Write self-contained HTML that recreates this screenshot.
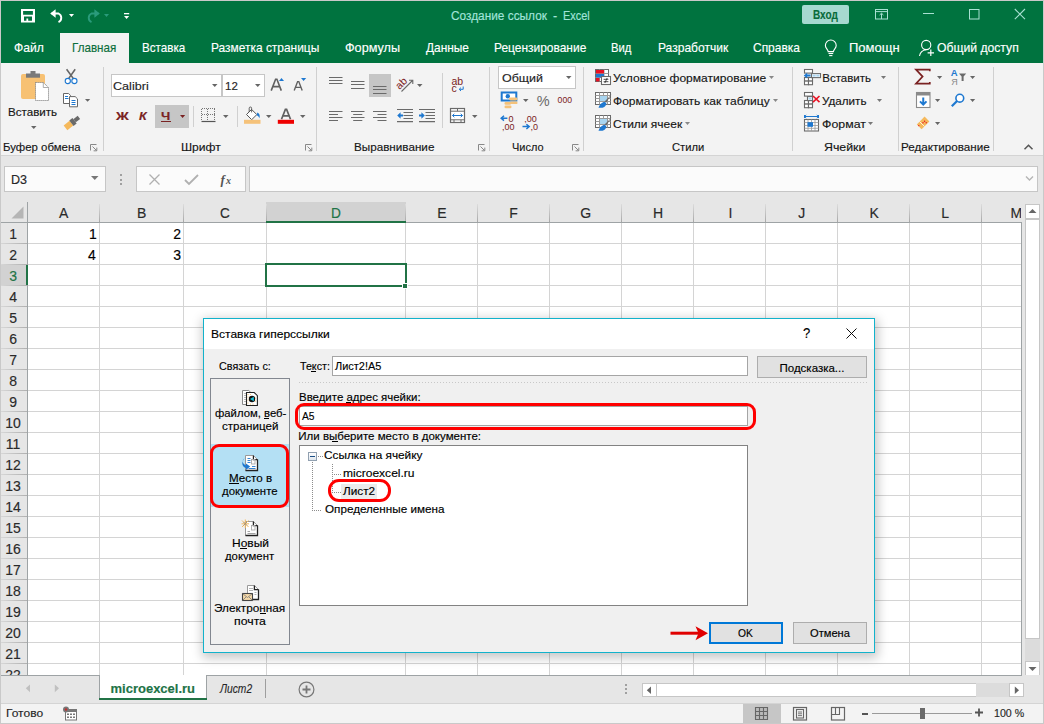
<!DOCTYPE html>
<html><head><meta charset="utf-8"><style>
html,body{margin:0;padding:0;}
body{width:1044px;height:724px;overflow:hidden;position:relative;background:#e6e6e6;font-family:'Liberation Sans',sans-serif;}
.t{position:absolute;white-space:nowrap;line-height:1;transform-origin:0 0;font-family:'Liberation Sans',sans-serif;-webkit-text-stroke:0.15px currentColor;}
.a{position:absolute;box-sizing:border-box;}
svg{position:absolute;overflow:visible;}

</style></head><body>
<div class="a" style="left:0px;top:0px;width:1044px;height:63px;background:#00733f"></div>
<div class="a" style="left:60px;top:33px;width:69px;height:30px;background:#f3f3f3"></div>
<div class="a" style="left:0px;top:63px;width:1044px;height:92px;background:#f3f3f3"></div>
<div class="a" style="left:0px;top:155px;width:1044px;height:1px;background:#d4d4d4"></div>
<div class="a" style="left:0px;top:156px;width:1044px;height:46px;background:#e6e6e6"></div>
<div class="a" style="left:4px;top:166px;width:102px;height:26px;background:#fbfbfb;border:1px solid #c6c6c6"></div>
<div class="a" style="left:136px;top:166px;width:110px;height:26px;background:#fbfbfb;border:1px solid #c6c6c6"></div>
<div class="a" style="left:249px;top:166px;width:789px;height:26px;background:#fbfbfb;border:1px solid #c6c6c6"></div>
<div class="a" style="left:27px;top:222px;width:994px;height:453px;background:#fff"></div>
<div class="a" style="left:0px;top:202px;width:1022px;height:20px;background:#e6e6e6"></div>
<div class="a" style="left:266px;top:202px;width:140px;height:20px;background:#d2d2d2"></div>
<div class="a" style="left:0px;top:222px;width:27px;height:453px;background:#e6e6e6"></div>
<div class="a" style="left:0px;top:265px;width:27px;height:20px;background:#d2d2d2"></div>
<div class="a" style="left:99px;top:222px;width:1px;height:453px;background:#d4d4d4"></div>
<div class="a" style="left:99px;top:204px;width:1px;height:18px;background:linear-gradient(#dcdcdc,#a8a8a8)"></div>
<div class="a" style="left:183px;top:222px;width:1px;height:453px;background:#d4d4d4"></div>
<div class="a" style="left:183px;top:204px;width:1px;height:18px;background:linear-gradient(#dcdcdc,#a8a8a8)"></div>
<div class="a" style="left:266px;top:222px;width:1px;height:453px;background:#d4d4d4"></div>
<div class="a" style="left:266px;top:204px;width:1px;height:18px;background:linear-gradient(#dcdcdc,#a8a8a8)"></div>
<div class="a" style="left:405px;top:222px;width:1px;height:453px;background:#d4d4d4"></div>
<div class="a" style="left:405px;top:204px;width:1px;height:18px;background:linear-gradient(#dcdcdc,#a8a8a8)"></div>
<div class="a" style="left:477px;top:222px;width:1px;height:453px;background:#d4d4d4"></div>
<div class="a" style="left:477px;top:204px;width:1px;height:18px;background:linear-gradient(#dcdcdc,#a8a8a8)"></div>
<div class="a" style="left:549px;top:222px;width:1px;height:453px;background:#d4d4d4"></div>
<div class="a" style="left:549px;top:204px;width:1px;height:18px;background:linear-gradient(#dcdcdc,#a8a8a8)"></div>
<div class="a" style="left:621px;top:222px;width:1px;height:453px;background:#d4d4d4"></div>
<div class="a" style="left:621px;top:204px;width:1px;height:18px;background:linear-gradient(#dcdcdc,#a8a8a8)"></div>
<div class="a" style="left:693px;top:222px;width:1px;height:453px;background:#d4d4d4"></div>
<div class="a" style="left:693px;top:204px;width:1px;height:18px;background:linear-gradient(#dcdcdc,#a8a8a8)"></div>
<div class="a" style="left:765px;top:222px;width:1px;height:453px;background:#d4d4d4"></div>
<div class="a" style="left:765px;top:204px;width:1px;height:18px;background:linear-gradient(#dcdcdc,#a8a8a8)"></div>
<div class="a" style="left:837px;top:222px;width:1px;height:453px;background:#d4d4d4"></div>
<div class="a" style="left:837px;top:204px;width:1px;height:18px;background:linear-gradient(#dcdcdc,#a8a8a8)"></div>
<div class="a" style="left:909px;top:222px;width:1px;height:453px;background:#d4d4d4"></div>
<div class="a" style="left:909px;top:204px;width:1px;height:18px;background:linear-gradient(#dcdcdc,#a8a8a8)"></div>
<div class="a" style="left:981px;top:222px;width:1px;height:453px;background:#d4d4d4"></div>
<div class="a" style="left:981px;top:204px;width:1px;height:18px;background:linear-gradient(#dcdcdc,#a8a8a8)"></div>
<div class="a" style="left:28px;top:243px;width:993px;height:1px;background:#d4d4d4"></div>
<div class="a" style="left:0px;top:243px;width:27px;height:1px;background:linear-gradient(90deg,#d8d8d8,#b0b0b0)"></div>
<div class="a" style="left:28px;top:264px;width:993px;height:1px;background:#d4d4d4"></div>
<div class="a" style="left:0px;top:264px;width:27px;height:1px;background:linear-gradient(90deg,#d8d8d8,#b0b0b0)"></div>
<div class="a" style="left:28px;top:285px;width:993px;height:1px;background:#d4d4d4"></div>
<div class="a" style="left:0px;top:285px;width:27px;height:1px;background:linear-gradient(90deg,#d8d8d8,#b0b0b0)"></div>
<div class="a" style="left:28px;top:306px;width:993px;height:1px;background:#d4d4d4"></div>
<div class="a" style="left:0px;top:306px;width:27px;height:1px;background:linear-gradient(90deg,#d8d8d8,#b0b0b0)"></div>
<div class="a" style="left:28px;top:327px;width:993px;height:1px;background:#d4d4d4"></div>
<div class="a" style="left:0px;top:327px;width:27px;height:1px;background:linear-gradient(90deg,#d8d8d8,#b0b0b0)"></div>
<div class="a" style="left:28px;top:348px;width:993px;height:1px;background:#d4d4d4"></div>
<div class="a" style="left:0px;top:348px;width:27px;height:1px;background:linear-gradient(90deg,#d8d8d8,#b0b0b0)"></div>
<div class="a" style="left:28px;top:369px;width:993px;height:1px;background:#d4d4d4"></div>
<div class="a" style="left:0px;top:369px;width:27px;height:1px;background:linear-gradient(90deg,#d8d8d8,#b0b0b0)"></div>
<div class="a" style="left:28px;top:390px;width:993px;height:1px;background:#d4d4d4"></div>
<div class="a" style="left:0px;top:390px;width:27px;height:1px;background:linear-gradient(90deg,#d8d8d8,#b0b0b0)"></div>
<div class="a" style="left:28px;top:411px;width:993px;height:1px;background:#d4d4d4"></div>
<div class="a" style="left:0px;top:411px;width:27px;height:1px;background:linear-gradient(90deg,#d8d8d8,#b0b0b0)"></div>
<div class="a" style="left:28px;top:432px;width:993px;height:1px;background:#d4d4d4"></div>
<div class="a" style="left:0px;top:432px;width:27px;height:1px;background:linear-gradient(90deg,#d8d8d8,#b0b0b0)"></div>
<div class="a" style="left:28px;top:453px;width:993px;height:1px;background:#d4d4d4"></div>
<div class="a" style="left:0px;top:453px;width:27px;height:1px;background:linear-gradient(90deg,#d8d8d8,#b0b0b0)"></div>
<div class="a" style="left:28px;top:474px;width:993px;height:1px;background:#d4d4d4"></div>
<div class="a" style="left:0px;top:474px;width:27px;height:1px;background:linear-gradient(90deg,#d8d8d8,#b0b0b0)"></div>
<div class="a" style="left:28px;top:495px;width:993px;height:1px;background:#d4d4d4"></div>
<div class="a" style="left:0px;top:495px;width:27px;height:1px;background:linear-gradient(90deg,#d8d8d8,#b0b0b0)"></div>
<div class="a" style="left:28px;top:516px;width:993px;height:1px;background:#d4d4d4"></div>
<div class="a" style="left:0px;top:516px;width:27px;height:1px;background:linear-gradient(90deg,#d8d8d8,#b0b0b0)"></div>
<div class="a" style="left:28px;top:537px;width:993px;height:1px;background:#d4d4d4"></div>
<div class="a" style="left:0px;top:537px;width:27px;height:1px;background:linear-gradient(90deg,#d8d8d8,#b0b0b0)"></div>
<div class="a" style="left:28px;top:558px;width:993px;height:1px;background:#d4d4d4"></div>
<div class="a" style="left:0px;top:558px;width:27px;height:1px;background:linear-gradient(90deg,#d8d8d8,#b0b0b0)"></div>
<div class="a" style="left:28px;top:579px;width:993px;height:1px;background:#d4d4d4"></div>
<div class="a" style="left:0px;top:579px;width:27px;height:1px;background:linear-gradient(90deg,#d8d8d8,#b0b0b0)"></div>
<div class="a" style="left:28px;top:600px;width:993px;height:1px;background:#d4d4d4"></div>
<div class="a" style="left:0px;top:600px;width:27px;height:1px;background:linear-gradient(90deg,#d8d8d8,#b0b0b0)"></div>
<div class="a" style="left:28px;top:621px;width:993px;height:1px;background:#d4d4d4"></div>
<div class="a" style="left:0px;top:621px;width:27px;height:1px;background:linear-gradient(90deg,#d8d8d8,#b0b0b0)"></div>
<div class="a" style="left:28px;top:642px;width:993px;height:1px;background:#d4d4d4"></div>
<div class="a" style="left:0px;top:642px;width:27px;height:1px;background:linear-gradient(90deg,#d8d8d8,#b0b0b0)"></div>
<div class="a" style="left:28px;top:663px;width:993px;height:1px;background:#d4d4d4"></div>
<div class="a" style="left:0px;top:663px;width:27px;height:1px;background:linear-gradient(90deg,#d8d8d8,#b0b0b0)"></div>
<div class="a" style="left:0px;top:222px;width:1022px;height:1px;background:#9ea3a5"></div>
<div class="a" style="left:27px;top:202px;width:1px;height:473px;background:#9ea3a5"></div>
<div class="a" style="left:1021px;top:222px;width:1px;height:454px;background:#9ea3a5"></div>
<div class="a" style="left:27px;top:675px;width:995px;height:1px;background:#9ea3a5"></div>
<div class="a" style="left:266px;top:221px;width:140px;height:2px;background:#217346"></div>
<div class="a" style="left:26px;top:265px;width:2px;height:20px;background:#217346"></div>
<div class="a" style="left:265px;top:263px;width:142px;height:24px;border:2px solid #217346"></div>
<div class="a" style="left:402px;top:283px;width:6px;height:6px;background:#217346;border:1px solid #fff"></div>
<div class="a" style="left:1022px;top:202px;width:21px;height:474px;background:#e6e6e6"></div>
<div class="a" style="left:1025px;top:204px;width:15px;height:15px;background:#fff;border:1px solid #c6c6c6"></div>
<div class="a" style="left:1025px;top:219px;width:15px;height:420px;background:#fff;border:1px solid #c6c6c6"></div>
<div class="a" style="left:1025px;top:661px;width:15px;height:15px;background:#fff;border:1px solid #c6c6c6"></div>
<div class="a" style="left:0px;top:675px;width:1044px;height:28px;background:#e6e6e6"></div>
<div class="a" style="left:0px;top:675px;width:1022px;height:1px;background:#9ea3a5"></div>
<div class="a" style="left:99px;top:675px;width:108px;height:25px;background:#fff"></div>
<div class="a" style="left:99px;top:675px;width:1px;height:24px;background:#9ea3a5"></div>
<div class="a" style="left:206px;top:675px;width:1px;height:24px;background:#9ea3a5"></div>
<div class="a" style="left:99px;top:698px;width:108px;height:2px;background:#217346"></div>
<div class="a" style="left:265px;top:679px;width:1px;height:19px;background:#9e9e9e"></div>
<div class="a" style="left:642px;top:683px;width:15px;height:14px;background:#fff;border:1px solid #c6c6c6"></div>
<div class="a" style="left:656px;top:683px;width:321px;height:14px;background:#fff;border:1px solid #c6c6c6"></div>
<div class="a" style="left:1009px;top:683px;width:15px;height:14px;background:#fff;border:1px solid #c6c6c6"></div>
<div class="a" style="left:0px;top:703px;width:1044px;height:21px;background:#f3f3f3;border-top:1px solid #d4d4d4"></div>
<div class="a" style="left:743px;top:704px;width:38px;height:20px;background:#c6c6c6"></div>
<div class="a" style="left:0px;top:0px;width:1044px;height:724px;border:1px solid #c9c9c9"></div>
<svg style="left:21px;top:9px;" width="14" height="14" viewBox="0 0 14 14"><path fill="#fff" fill-rule="evenodd" d="M0 0H14V13.6H0Z M2.1 2H11.9V5.8H2.1Z M3 7.6H11V11.8H7.2V9.6H5.4V11.8H3Z"/></svg>
<svg style="left:48px;top:8px;" width="18" height="16" viewBox="0 0 18 16"><path d="M3.5 5.5H10.5A4.8 4.8 0 0 1 10.5 14.2" fill="none" stroke="#fff" stroke-width="1.9"/><path d="M2.2 5.5L7.6 1.3V9.7Z" fill="#fff"/></svg>
<svg style="left:69px;top:14px;" width="5" height="3" viewBox="0 0 5 3"><path d="M0 0H5L2.5 3Z" fill="#fff"/></svg>
<svg style="left:84px;top:8px;" width="18" height="16" viewBox="0 0 18 16"><path d="M14.5 5.5H7.5A4.8 4.8 0 0 0 7.5 14.2" fill="none" stroke="#2a9b7b" stroke-width="1.9"/><path d="M15.8 5.5L10.4 1.3V9.7Z" fill="#2a9b7b"/></svg>
<svg style="left:104px;top:14px;" width="5" height="3" viewBox="0 0 5 3"><path d="M0 0H5L2.5 3Z" fill="#2a9b7b"/></svg>
<svg style="left:124px;top:12px;" width="6" height="8" viewBox="0 0 6 8"><rect x="0" y="1" width="5.2" height="1.3" fill="#fff"/><path d="M0 4H5.2L2.6 7Z" fill="#fff"/></svg>
<div class="a" style="left:802px;top:5px;width:47px;height:19px;background:#a6d9d0;border-radius:2px"></div>
<svg style="left:874px;top:8px;" width="15" height="12" viewBox="0 0 15 12"><rect x="1.5" y="1.5" width="12" height="9.5" fill="none" stroke="#a8e0d2" stroke-width="1"/><line x1="1.5" y1="3.6" x2="13.5" y2="3.6" stroke="#a8e0d2"/><line x1="7.5" y1="5.5" x2="7.5" y2="11" stroke="#a8e0d2"/><path d="M5.6 7L7.5 5.2L9.4 7" fill="none" stroke="#a8e0d2"/></svg>
<div class="a" style="left:923px;top:13px;width:11px;height:1px;background:#a8e0d2"></div>
<svg style="left:968px;top:8px;" width="12" height="12" viewBox="0 0 12 12"><rect x="1.5" y="1.5" width="9.5" height="9.5" fill="none" stroke="#a8e0d2" stroke-width="1"/></svg>
<svg style="left:1014px;top:8px;" width="12" height="12" viewBox="0 0 12 12"><path d="M0.8 1L11 11.2M11 1L0.8 11.2" stroke="#a8e0d2" stroke-width="1.1"/></svg>
<svg style="left:823px;top:39px;" width="16" height="18" viewBox="0 0 16 18"><path d="M5.2 12.6C5 10.6 2.4 9.2 2.4 6.4A5.4 5.4 0 0 1 13.2 6.4C13.2 9.2 10.6 10.6 10.4 12.6Z" fill="none" stroke="#fff" stroke-width="1.1"/><line x1="5.5" y1="14.5" x2="10.2" y2="14.5" stroke="#fff" stroke-width="1.1"/><line x1="6.2" y1="16.6" x2="9.4" y2="16.6" stroke="#fff" stroke-width="1.1"/></svg>
<svg style="left:918px;top:39px;" width="18" height="18" viewBox="0 0 18 18"><circle cx="8.2" cy="6" r="4.6" fill="none" stroke="#fff" stroke-width="1.1"/><path d="M1.5 17C2.2 13.2 4.8 11.2 8.2 10.8" fill="none" stroke="#fff" stroke-width="1.1"/><path d="M12.8 10.5V17M9.6 13.8H16" stroke="#fff" stroke-width="1.2"/></svg>
<svg style="left:20px;top:70px;" width="30" height="32" viewBox="0 0 30 32"><rect x="1" y="4" width="24" height="25" rx="2" fill="#f7c173"/><rect x="6" y="3.5" width="14" height="4.2" fill="#7a7a7a"/><rect x="10.5" y="1" width="5" height="3" fill="#7a7a7a"/><path d="M15.5 12.5H23.3L28.5 17.5V30.5H15.5Z" fill="#fff" stroke="#777" stroke-width="0.9" stroke-dasharray="1.2 0.8"/><path d="M23.3 12.5V17.5H28.5" fill="none" stroke="#999" stroke-width="0.8"/></svg>
<svg style="left:31px;top:126px;" width="6" height="3" viewBox="0 0 6 3"><path d="M0 0H5.5L2.75 3Z" fill="#666"/></svg>
<svg style="left:63px;top:68px;" width="16" height="17" viewBox="0 0 16 17"><path d="M3.6 1.2L10.4 10.6M12.2 1.2L5.6 10.6" stroke="#666" stroke-width="1.6"/><circle cx="4.8" cy="13" r="2.6" fill="#fff" stroke="#1e78d0" stroke-width="1.1"/><circle cx="11.4" cy="13" r="2.6" fill="#fff" stroke="#1e78d0" stroke-width="1.1"/></svg>
<svg style="left:62px;top:92px;" width="17" height="16" viewBox="0 0 17 16"><path d="M1.5 1.5H6.6L8.5 3.4V11.5H1.5Z" fill="#fff" stroke="#666" stroke-width="1"/><path d="M3 4.5H6M3 6.5H6.5" stroke="#1e78d0" stroke-width="1"/><path d="M7.5 4.6H13.2L15.5 6.9V14.8H7.5Z" fill="#fff" stroke="#666" stroke-width="1"/><path d="M9.5 8.5H13.5M9.5 10.5H13.5M9.5 12.5H13.5" stroke="#1e78d0" stroke-width="1"/></svg>
<svg style="left:85px;top:99px;" width="6" height="3" viewBox="0 0 6 3"><path d="M0 0H5.2L2.6 2.8Z" fill="#666"/></svg>
<svg style="left:62px;top:114px;" width="19" height="17" viewBox="0 0 19 17"><g transform="rotate(-38 9.5 8.5)"><rect x="1.5" y="6" width="7.5" height="6" fill="#f5b95c"/><rect x="9" y="5.6" width="4" height="6.8" fill="#6a6a6a"/><rect x="13" y="7" width="5.5" height="4" fill="#6a6a6a"/></g></svg>
<svg style="left:90px;top:144px;" width="8" height="8" viewBox="0 0 8 8"><path d="M0.5 6.5V0.5H6.5" fill="none" stroke="#888" stroke-width="1"/><path d="M2.5 2.5L6.5 6.5M6.8 3.6V6.8H3.6" fill="none" stroke="#888" stroke-width="1"/></svg>
<svg style="left:305px;top:144px;" width="8" height="8" viewBox="0 0 8 8"><path d="M0.5 6.5V0.5H6.5" fill="none" stroke="#888" stroke-width="1"/><path d="M2.5 2.5L6.5 6.5M6.8 3.6V6.8H3.6" fill="none" stroke="#888" stroke-width="1"/></svg>
<svg style="left:478px;top:144px;" width="8" height="8" viewBox="0 0 8 8"><path d="M0.5 6.5V0.5H6.5" fill="none" stroke="#888" stroke-width="1"/><path d="M2.5 2.5L6.5 6.5M6.8 3.6V6.8H3.6" fill="none" stroke="#888" stroke-width="1"/></svg>
<svg style="left:572px;top:144px;" width="8" height="8" viewBox="0 0 8 8"><path d="M0.5 6.5V0.5H6.5" fill="none" stroke="#888" stroke-width="1"/><path d="M2.5 2.5L6.5 6.5M6.8 3.6V6.8H3.6" fill="none" stroke="#888" stroke-width="1"/></svg>
<div class="a" style="left:103px;top:67px;width:1px;height:84px;background:#d0d0d0"></div>
<div class="a" style="left:316px;top:67px;width:1px;height:84px;background:#d0d0d0"></div>
<div class="a" style="left:489px;top:67px;width:1px;height:84px;background:#d0d0d0"></div>
<div class="a" style="left:583px;top:67px;width:1px;height:84px;background:#d0d0d0"></div>
<div class="a" style="left:792px;top:67px;width:1px;height:84px;background:#d0d0d0"></div>
<div class="a" style="left:898px;top:67px;width:1px;height:84px;background:#d0d0d0"></div>
<div class="a" style="left:993px;top:67px;width:1px;height:84px;background:#d0d0d0"></div>
<div class="a" style="left:111px;top:74px;width:111px;height:23px;background:#fff;border:1px solid #c6c6c6"></div>
<div class="a" style="left:222px;top:74px;width:43px;height:23px;background:#fff;border:1px solid #c6c6c6"></div>
<svg style="left:211.5px;top:84.3px;" width="5.5" height="3" viewBox="0 0 5.5 3"><path d="M0 0H5.5L2.75 3Z" fill="#666"/></svg>
<svg style="left:254.7px;top:84.3px;" width="5.5" height="3" viewBox="0 0 5.5 3"><path d="M0 0H5.5L2.75 3Z" fill="#666"/></svg>
<svg style="left:270px;top:77px;" width="16" height="15" viewBox="0 0 16 15"><path d="M1.2 13.6L5.6 2.2H6.9L11.3 13.6M3 9.6H9.5" fill="none" stroke="#606060" stroke-width="1.6"/><path d="M9 4H14L11.5 1Z" fill="#1e78d0"/></svg>
<svg style="left:293px;top:77px;" width="15" height="15" viewBox="0 0 15 15"><path d="M1.2 13.6L4.6 4.6H5.8L9.2 13.6M2.6 10.4H7.8" fill="none" stroke="#606060" stroke-width="1.4"/><path d="M8 1H13.2L10.6 4Z" fill="#1e78d0"/></svg>
<div class="a" style="left:155px;top:105px;width:34px;height:23px;background:#c6c6c6"></div>
<div class="a" style="left:161px;top:121px;width:10px;height:1.3px;background:#7a2222"></div>
<svg style="left:180px;top:115px;" width="6" height="3" viewBox="0 0 6 3"><path d="M0 0H5.2L2.6 3Z" fill="#7a2222"/></svg>
<div class="a" style="left:193px;top:106px;width:1px;height:21px;background:#d0d0d0"></div>
<div class="a" style="left:237px;top:106px;width:1px;height:21px;background:#d0d0d0"></div>
<svg style="left:201px;top:108px;" width="15" height="15" viewBox="0 0 15 15"><g stroke="#777" stroke-width="1" stroke-dasharray="1 1"><path d="M1 0.5H14M1 6.5H14M0.5 1V13M6.5 1V13M13.5 1V13"/></g><path d="M0.5 13.5H14.5" stroke="#555" stroke-width="1.2"/></svg>
<svg style="left:222.5px;top:115px;" width="5.5" height="3" viewBox="0 0 5.5 3"><path d="M0 0H5.5L2.75 3Z" fill="#666"/></svg>
<svg style="left:243px;top:106px;" width="19" height="19" viewBox="0 0 19 19"><path d="M3.5 8.5L8.6 3.4L13.8 8.6L8.7 13.7Z" fill="#fff" stroke="#555" stroke-width="1"/><path d="M6.2 6V2.2A1.2 1.2 0 0 1 8.6 2.2V6.4" fill="none" stroke="#555" stroke-width="0.9"/><path d="M14.4 6.4C16.6 7.4 17.2 9.6 16.4 12.2C15.8 10.6 15 9.6 13.6 9.2Z" fill="#1e78d0"/><rect x="1" y="13.8" width="16.5" height="4" fill="#f5c27a"/></svg>
<svg style="left:265.5px;top:115px;" width="5.5" height="3" viewBox="0 0 5.5 3"><path d="M0 0H5.5L2.75 3Z" fill="#666"/></svg>
<svg style="left:277px;top:108px;" width="18" height="17" viewBox="0 0 18 17"><path d="M4.5 11.2L8.4 1.4H9.6L13.5 11.2M6.2 7.8H11.8" fill="none" stroke="#606060" stroke-width="1.7"/><rect x="0.8" y="11.8" width="16.2" height="4" fill="#ee0000"/></svg>
<svg style="left:299.5px;top:115px;" width="5.5" height="3" viewBox="0 0 5.5 3"><path d="M0 0H5.5L2.75 3Z" fill="#666"/></svg>
<svg style="left:328px;top:73px;" width="20" height="20" viewBox="0 0 20 20"><path d="M1 4.5H14.5M1 7.5H14.5M1 10.5H14.5" stroke="#6a6a6a" stroke-width="1" fill="none"/></svg>
<svg style="left:350px;top:73px;" width="20" height="20" viewBox="0 0 20 20"><path d="M1 8.5H14.5M1 11.5H14.5M1 15.5H14.5" stroke="#6a6a6a" stroke-width="1" fill="none"/></svg>
<div class="a" style="left:369px;top:74px;width:22px;height:23px;background:#c6c6c6"></div>
<svg style="left:372px;top:73px;" width="20" height="20" viewBox="0 0 20 20"><path d="M1 13.5H14.5M1 16.5H14.5M1 20.5H14.5" stroke="#6a6a6a" stroke-width="1" fill="none"/></svg>
<svg style="left:396px;top:76px;" width="20" height="17" viewBox="0 0 20 17"><text x="0" y="0" transform="translate(3.5,14) rotate(-45)" font-family="Liberation Sans" font-size="10.5" fill="#7a2222">ab</text><path d="M5.5 15.5L16.5 4.5M13 4.3H16.8V8" stroke="#6a6a6a" stroke-width="1.1" fill="none"/></svg>
<svg style="left:417px;top:84px;" width="5.5" height="3" viewBox="0 0 5.5 3"><path d="M0 0H5.5L2.75 3Z" fill="#666"/></svg>
<div class="a" style="left:442px;top:73px;width:1px;height:55px;background:#d0d0d0"></div>
<svg style="left:450px;top:76px;" width="16" height="18" viewBox="0 0 16 18"><text x="1.5" y="8.8" font-family="Liberation Sans" font-size="10.5" fill="#7a2222">ab</text><text x="1.5" y="15.8" font-family="Liberation Sans" font-size="10.5" fill="#7a2222">c</text><path d="M13.2 10.5V13.3H9.4M11 11.6L9.2 13.3L11 15" stroke="#1e78d0" stroke-width="1" fill="none"/></svg>
<svg style="left:328px;top:107px;" width="20" height="20" viewBox="0 0 20 20"><path d="M1 4.5H14.5M1 7.5H10M1 10.5H14.5M1 13.5H10" stroke="#6a6a6a" stroke-width="1" fill="none"/></svg>
<svg style="left:350px;top:107px;" width="20" height="20" viewBox="0 0 20 20"><path d="M1 4.5H14.5M3.2 7.5H12.3M1 10.5H14.5M3.2 13.5H12.3" stroke="#6a6a6a" stroke-width="1" fill="none"/></svg>
<svg style="left:372px;top:107px;" width="20" height="20" viewBox="0 0 20 20"><path d="M1 4.5H14.5M5.5 7.5H14.5M1 10.5H14.5M5.5 13.5H14.5" stroke="#6a6a6a" stroke-width="1" fill="none"/></svg>
<svg style="left:396px;top:107px;" width="18" height="17" viewBox="0 0 18 17"><path d="M1 2.5H17M7.5 5.5H17M7.5 8.5H17M7.5 11.5H17M1 14.6H17" stroke="#6a6a6a" stroke-width="1.1"/><path d="M1.2 8.5L4.6 5.3V7.4H7V9.6H4.6V11.7Z" fill="#1e78d0"/></svg>
<svg style="left:418px;top:107px;" width="18" height="17" viewBox="0 0 18 17"><path d="M1 2.5H17M7.5 5.5H17M7.5 8.5H17M7.5 11.5H17M1 14.6H17" stroke="#6a6a6a" stroke-width="1.1"/><path d="M6.8 8.5L3.4 5.3V7.4H1V9.6H3.4V11.7Z" fill="#1e78d0"/></svg>
<svg style="left:449px;top:107px;" width="17" height="17" viewBox="0 0 17 17"><rect x="1.5" y="1.5" width="14" height="14" fill="#fff" stroke="#6a6a6a" stroke-width="1.2"/><path d="M1.5 4.2H15.5M1.5 12.8H15.5M8.5 1.5V4.2M5 12.8V15.5M12 12.8V15.5" stroke="#6a6a6a" stroke-width="1"/><path d="M3.5 8.5H13.5M5.3 6.8L3.5 8.5L5.3 10.2M11.7 6.8L13.5 8.5L11.7 10.2" stroke="#1e78d0" stroke-width="1" fill="none"/></svg>
<svg style="left:472px;top:114.7px;" width="5.5" height="3" viewBox="0 0 5.5 3"><path d="M0 0H5.5L2.75 3Z" fill="#666"/></svg>
<div class="a" style="left:498px;top:66px;width:78px;height:23px;background:#fff;border:1px solid #c6c6c6"></div>
<svg style="left:565.8px;top:76px;" width="5.5" height="3" viewBox="0 0 5.5 3"><path d="M0 0H5.5L2.75 3Z" fill="#666"/></svg>
<svg style="left:500px;top:91px;" width="19" height="18" viewBox="0 0 19 18"><rect x="1.7" y="1.5" width="14.6" height="8" fill="#fff" stroke="#1e78d0" stroke-width="2"/><circle cx="7.8" cy="5.2" r="2.2" fill="#1e78d0"/><rect x="9" y="6.5" width="8.5" height="3" rx="1.4" fill="#f5c27a"/><rect x="10" y="10.5" width="7.5" height="2.6" rx="1.2" fill="#f5c27a"/><rect x="4.5" y="11" width="6.5" height="2.8" rx="1.3" fill="#f5c27a"/><rect x="4.5" y="14.5" width="7" height="2.8" rx="1.3" fill="#f5c27a"/></svg>
<svg style="left:523px;top:99px;" width="5.5" height="3" viewBox="0 0 5.5 3"><path d="M0 0H5.5L2.75 3Z" fill="#666"/></svg>
<svg style="left:536px;top:93px;" width="16" height="14" viewBox="0 0 16 14"><text x="0.8" y="12.6" font-family="Liberation Sans" font-size="14.5" fill="#6a6a6a">%</text></svg>
<svg style="left:556px;top:95px;" width="18" height="10" viewBox="0 0 18 10"><text x="1.6" y="7.8" font-family="Liberation Sans" font-size="9" fill="#7a2222" textLength="14.4" lengthAdjust="spacingAndGlyphs">000</text></svg>
<svg style="left:500px;top:114px;" width="18" height="18" viewBox="0 0 18 18"><text x="8.5" y="8" font-family="Liberation Sans" font-size="9" fill="#7a2222">0</text><text x="2" y="16" font-family="Liberation Sans" font-size="9" fill="#7a2222">,00</text><path d="M1.2 4.2H7.4M4 1.8L1.2 4.2L4 6.6" stroke="#1e78d0" stroke-width="1.5" fill="none"/></svg>
<svg style="left:521px;top:114px;" width="18" height="18" viewBox="0 0 18 18"><text x="3.2" y="8" font-family="Liberation Sans" font-size="9" fill="#7a2222">,00</text><text x="9.5" y="16" font-family="Liberation Sans" font-size="9" fill="#7a2222">,0</text><path d="M1.5 12.6H8.2M5.4 10.2L8.2 12.6L5.4 15" stroke="#1e78d0" stroke-width="1.5" fill="none"/></svg>
<svg style="left:594px;top:68px;" width="18" height="18" viewBox="0 0 18 18"><rect x="1.5" y="1.5" width="13" height="12" fill="#fff" stroke="#6a6a6a" stroke-width="1"/><path d="M1.5 5.5H14.5M1.5 9.5H14.5M5.5 1.5V13.5M10 1.5V13.5" stroke="#9a9a9a" stroke-width="1"/><rect x="2" y="2" width="8" height="3.4" fill="#e81123"/><rect x="2" y="6" width="8" height="3.4" fill="#1e78d0"/><rect x="2" y="10" width="3.4" height="3.4" fill="#e81123"/><rect x="7.5" y="8.5" width="9" height="8" fill="#fff" stroke="#6a6a6a" stroke-width="1.1"/><path d="M9.6 11.3H14.4M9.6 13.7H14.4M13.2 10L10.8 15" stroke="#333" stroke-width="0.9"/></svg>
<svg style="left:594px;top:91px;" width="18" height="18" viewBox="0 0 18 18"><rect x="1.5" y="1.5" width="15" height="12" fill="#fff" stroke="#6a6a6a" stroke-width="1"/><path d="M1.5 4.5H16.5M1.5 7.5H16.5M1.5 10.5H16.5M5.5 1.5V13.5M9.5 1.5V13.5M13.5 1.5V13.5" stroke="#9a9a9a" stroke-width="1"/><rect x="6" y="5" width="7" height="5" fill="#a9d5f0"/><path d="M10.5 10.5L16 5V2.5L17.3 3.8L12.2 11.8Z" fill="#6a6a6a"/><path d="M4.5 16.8C5.5 13.5 7.6 11.2 10.8 10.8L12.4 12.4C12 15.4 9.6 17.2 4.5 16.8Z" fill="#1e78d0"/></svg>
<svg style="left:594px;top:114px;" width="18" height="18" viewBox="0 0 18 18"><rect x="1.5" y="1.5" width="15" height="12" fill="#fff" stroke="#6a6a6a" stroke-width="1"/><path d="M1.5 4.5H16.5M1.5 7.5H16.5M1.5 10.5H16.5M5.5 1.5V13.5M9.5 1.5V13.5M13.5 1.5V13.5" stroke="#9a9a9a" stroke-width="1"/><rect x="6" y="5" width="7" height="5" fill="#a9d5f0"/><path d="M10.5 10.5L16 5V2.5L17.3 3.8L12.2 11.8Z" fill="#6a6a6a"/><path d="M4.5 16.8C5.5 13.5 7.6 11.2 10.8 10.8L12.4 12.4C12 15.4 9.6 17.2 4.5 16.8Z" fill="#1e78d0"/></svg>
<svg style="left:769px;top:76px;" width="5" height="3" viewBox="0 0 5 3"><path d="M0 0H5L2.5 3Z" fill="#888"/></svg>
<svg style="left:773px;top:99px;" width="5" height="3" viewBox="0 0 5 3"><path d="M0 0H5L2.5 3Z" fill="#888"/></svg>
<svg style="left:685px;top:122px;" width="5" height="3" viewBox="0 0 5 3"><path d="M0 0H5L2.5 3Z" fill="#888"/></svg>
<svg style="left:803px;top:68px;" width="19" height="18" viewBox="0 0 19 18"><g fill="#fff" stroke="#6a6a6a" stroke-width="1.1"><rect x="1.5" y="1.5" width="8" height="3.6"/><rect x="1.5" y="9.5" width="4" height="3.6"/><rect x="5.5" y="9.5" width="4" height="3.6"/><rect x="1.5" y="13.1" width="4" height="3.6"/><rect x="5.5" y="13.1" width="4" height="3.6"/><rect x="8.5" y="5.6" width="9" height="4"/></g><rect x="9.5" y="6.6" width="3.2" height="2" fill="#a9d5f0"/><rect x="13.3" y="6.6" width="3.2" height="2" fill="#a9d5f0"/><path d="M0.8 7.6L4.2 4.8V6.6H7.5V8.6H4.2V10.4Z" fill="#1e78d0"/></svg>
<svg style="left:803px;top:91px;" width="19" height="18" viewBox="0 0 19 18"><g fill="#fff" stroke="#6a6a6a" stroke-width="1.1"><rect x="1.5" y="1.5" width="8" height="3.6"/><rect x="1.5" y="9.5" width="4" height="3.6"/><rect x="5.5" y="9.5" width="4" height="3.6"/><rect x="1.5" y="13.1" width="4" height="3.6"/><rect x="5.5" y="13.1" width="4" height="3.6"/><rect x="4.5" y="5.6" width="5" height="4"/></g><rect x="5.5" y="6.6" width="3" height="2" fill="#a9d5f0"/><path d="M10 5L16.5 11.2M16.5 5L10 11.2" stroke="#e81123" stroke-width="1.6"/></svg>
<svg style="left:803px;top:114px;" width="19" height="19" viewBox="0 0 19 19"><path d="M1.5 2.5H15.5M1.5 1V4M15.5 1V4M3.2 1L1.5 2.5L3.2 4M13.8 1L15.5 2.5L13.8 4" stroke="#1e78d0" stroke-width="1" fill="none"/><rect x="1.5" y="5.5" width="14" height="11.5" fill="#fff" stroke="#6a6a6a" stroke-width="1.1"/><path d="M1.5 8.5H15.5M1.5 11.5H15.5M1.5 14.3H15.5M5 5.5V17M8.5 5.5V17M12 5.5V17" stroke="#9a9a9a" stroke-width="0.8"/><rect x="4.5" y="8.2" width="5.5" height="4.6" fill="#1e78d0"/></svg>
<svg style="left:881px;top:76px;" width="5" height="3" viewBox="0 0 5 3"><path d="M0 0H5L2.5 3Z" fill="#777"/></svg>
<svg style="left:877px;top:99px;" width="5" height="3" viewBox="0 0 5 3"><path d="M0 0H5L2.5 3Z" fill="#777"/></svg>
<svg style="left:868px;top:122px;" width="5" height="3" viewBox="0 0 5 3"><path d="M0 0H5L2.5 3Z" fill="#777"/></svg>
<svg style="left:914px;top:68px;" width="18" height="18" viewBox="0 0 18 18"><path d="M15.8 3.2V1.6H2L8.6 8.6L2 15.6H15.8V14" fill="none" stroke="#7a2222" stroke-width="1.7"/></svg>
<svg style="left:937px;top:76px;" width="5.2" height="3" viewBox="0 0 5.2 3"><path d="M0 0H5.2L2.6 3Z" fill="#666"/></svg>
<svg style="left:950px;top:67px;" width="18" height="19" viewBox="0 0 18 19"><text x="0.8" y="9" font-family="Liberation Sans" font-size="9.5" font-weight="bold" fill="#1e78d0">A</text><text x="1.2" y="17.8" font-family="Liberation Sans" font-size="9" fill="#888">Я</text><path d="M9 6.6H16.2L13.6 9.6V14H11.6V9.6Z" fill="#6a6a6a"/></svg>
<svg style="left:970px;top:76px;" width="5.2" height="3" viewBox="0 0 5.2 3"><path d="M0 0H5.2L2.6 3Z" fill="#666"/></svg>
<svg style="left:915px;top:91px;" width="17" height="18" viewBox="0 0 17 18"><rect x="1.5" y="1.5" width="13.5" height="15" fill="#fff" stroke="#8a8a8a" stroke-width="1.1"/><rect x="1.5" y="1.5" width="13.5" height="3" fill="#8a8a8a"/><path d="M8.25 6.5V13.5M5 10.4L8.25 13.6L11.5 10.4" stroke="#1e78d0" stroke-width="2" fill="none"/></svg>
<svg style="left:935px;top:99px;" width="5.2" height="3" viewBox="0 0 5.2 3"><path d="M0 0H5.2L2.6 3Z" fill="#666"/></svg>
<svg style="left:950px;top:93px;" width="16" height="15" viewBox="0 0 16 15"><circle cx="9.8" cy="5.2" r="3.9" fill="#fff" stroke="#1e78d0" stroke-width="1.6"/><path d="M7 8L1.8 13.2" stroke="#1e78d0" stroke-width="2.2"/></svg>
<svg style="left:970px;top:99px;" width="5.2" height="3" viewBox="0 0 5.2 3"><path d="M0 0H5.2L2.6 3Z" fill="#666"/></svg>
<svg style="left:915px;top:115px;" width="16" height="15" viewBox="0 0 16 15"><path d="M9.6 1.6L14.4 6.4L6.6 14.2L1.8 9.4Z" fill="#f5b95c"/><path d="M4.6 6.6L9.4 11.4" stroke="#fff" stroke-width="0.8"/><g fill="#e81123"><circle cx="9.6" cy="6.2" r="0.7"/><circle cx="11.2" cy="7.8" r="0.7"/><circle cx="8" cy="7.8" r="0.7"/><circle cx="3.8" cy="10.6" r="0.7"/></g></svg>
<svg style="left:935px;top:122px;" width="5.2" height="3" viewBox="0 0 5.2 3"><path d="M0 0H5.2L2.6 3Z" fill="#666"/></svg>
<svg style="left:1023px;top:143px;" width="12" height="8" viewBox="0 0 12 8"><path d="M1.5 6.2L5.5 2.2L9.5 6.2" fill="none" stroke="#555" stroke-width="1.5"/></svg>
<svg style="left:91px;top:176px;" width="8" height="5" viewBox="0 0 8 5"><path d="M0 0H7.5L3.75 4Z" fill="#777"/></svg>
<div class="a" style="left:120px;top:174px;width:2px;height:2px;background:#a0a0a0"></div>
<div class="a" style="left:120px;top:178.5px;width:2px;height:2px;background:#a0a0a0"></div>
<div class="a" style="left:120px;top:183px;width:2px;height:2px;background:#a0a0a0"></div>
<svg style="left:148px;top:173px;" width="14" height="13" viewBox="0 0 14 13"><path d="M1.5 1.5L11.5 11.5M11.5 1.5L1.5 11.5" stroke="#b0b0b0" stroke-width="1.3"/></svg>
<svg style="left:184px;top:173px;" width="15" height="13" viewBox="0 0 15 13"><path d="M1 7L5 11L14 2" fill="none" stroke="#b0b0b0" stroke-width="1.8"/></svg>
<svg style="left:219px;top:171px;" width="18" height="16" viewBox="0 0 18 16"><text x="1.5" y="12.5" font-family="Liberation Serif" font-size="13" font-style="italic" font-weight="bold" fill="#555">f</text><text x="7" y="13" font-family="Liberation Serif" font-size="10" font-style="italic" font-weight="bold" fill="#555">x</text></svg>
<svg style="left:1025px;top:175px;" width="10" height="7" viewBox="0 0 10 7"><path d="M1 1.5L4.5 5L8 1.5" fill="none" stroke="#b5b5b5" stroke-width="1.4"/></svg>
<svg style="left:11px;top:206px;" width="13" height="13" viewBox="0 0 13 13"><path d="M12.5 0.5V12.5H0.5Z" fill="#b5b5b5"/></svg>
<svg style="left:1028px;top:208px;" width="10" height="6" viewBox="0 0 10 6"><path d="M0.5 5L4.5 1L8.5 5Z" fill="#666"/></svg>
<svg style="left:1028px;top:666px;" width="10" height="6" viewBox="0 0 10 6"><path d="M0.5 1L4.5 5L8.5 1Z" fill="#666"/></svg>
<svg style="left:646px;top:686px;" width="6" height="9" viewBox="0 0 6 9"><path d="M5 0.5V8L0.8 4.25Z" fill="#666"/></svg>
<svg style="left:1014px;top:686px;" width="6" height="9" viewBox="0 0 6 9"><path d="M0.8 0.5V8L5 4.25Z" fill="#666"/></svg>
<div class="a" style="left:976px;top:683px;width:33px;height:14px;background:#dcdcdc"></div>
<div class="a" style="left:1025px;top:639px;width:15px;height:22px;background:#dcdcdc"></div>
<svg style="left:25px;top:684px;" width="6" height="9" viewBox="0 0 6 9"><path d="M5 0.5V8.2L0.8 4.35Z" fill="#c0c0c0"/></svg>
<svg style="left:54px;top:684px;" width="6" height="9" viewBox="0 0 6 9"><path d="M0.8 0.5V8.2L5 4.35Z" fill="#c0c0c0"/></svg>
<svg style="left:298px;top:681px;" width="18" height="17" viewBox="0 0 18 17"><circle cx="8.5" cy="8.5" r="7.4" fill="none" stroke="#777" stroke-width="1.2"/><path d="M8.5 4.5V12.5M4.5 8.5H12.5" stroke="#777" stroke-width="1.8"/></svg>
<div class="a" style="left:625px;top:684px;width:2px;height:2px;background:#a0a0a0"></div>
<div class="a" style="left:625px;top:688px;width:2px;height:2px;background:#a0a0a0"></div>
<div class="a" style="left:625px;top:692px;width:2px;height:2px;background:#a0a0a0"></div>
<svg style="left:62px;top:706px;" width="16" height="15" viewBox="0 0 16 15"><rect x="3.5" y="3.5" width="11" height="10.5" fill="#fff" stroke="#777" stroke-width="1"/><rect x="3.5" y="3.5" width="11" height="2.5" fill="#777"/><g fill="#777"><rect x="5" y="7.5" width="2" height="1.5"/><rect x="8" y="7.5" width="2" height="1.5"/><rect x="11" y="7.5" width="2" height="1.5"/><rect x="5" y="10.5" width="2" height="1.5"/><rect x="8" y="10.5" width="2" height="1.5"/><rect x="11" y="10.5" width="2" height="1.5"/></g><circle cx="4" cy="3.5" r="3" fill="#777"/><circle cx="4" cy="3.5" r="1.2" fill="#c03030"/></svg>
<svg style="left:754px;top:706px;" width="15" height="15" viewBox="0 0 15 15"><rect x="1.5" y="1.5" width="12" height="12" fill="#b9b9b9"/><path d="M1.5 1.5H13.5V13.5H1.5ZM1.5 5.5H13.5M1.5 9.5H13.5M5.5 1.5V13.5M9.5 1.5V13.5" fill="none" stroke="#666" stroke-width="1.1"/></svg>
<svg style="left:792px;top:706px;" width="16" height="16" viewBox="0 0 16 16"><rect x="1.5" y="1.5" width="13" height="12.5" fill="none" stroke="#666" stroke-width="1.2"/><rect x="4.5" y="3.5" width="7" height="8.5" fill="none" stroke="#666" stroke-width="1.1"/><path d="M6 6H10M6 7.8H10M6 9.6H10" stroke="#666" stroke-width="0.9"/></svg>
<svg style="left:830px;top:706px;" width="16" height="16" viewBox="0 0 16 16"><rect x="1.5" y="1.5" width="13" height="12.5" fill="none" stroke="#666" stroke-width="1.2"/><path d="M1.5 8.5H9.5V1.5M5.5 1.5V8.5" fill="none" stroke="#666" stroke-width="1.1"/></svg>
<div class="a" style="left:862px;top:713px;width:6px;height:2px;background:#555"></div>
<div class="a" style="left:872px;top:713px;width:100px;height:1px;background:#9a9a9a"></div>
<div class="a" style="left:920px;top:708px;width:5px;height:11px;background:#6a6a6a"></div>
<svg style="left:975px;top:708px;" width="8" height="9" viewBox="0 0 8 9"><path d="M4 0.5V8.5M0 4.5H8" stroke="#555" stroke-width="1.8"/></svg>
<div class="a" style="left:203px;top:318px;width:672px;height:335px;background:#f0f0f0;border:1px solid #12b2cb;box-shadow:1px 3px 10px 2px rgba(0,0,0,0.22)"></div>
<div class="a" style="left:204px;top:319px;width:670px;height:30px;background:#fff"></div>
<svg style="left:846px;top:328px;" width="11" height="11" viewBox="0 0 11 11"><path d="M0.5 0.5L10.5 10.5M10.5 0.5L0.5 10.5" stroke="#000" stroke-width="0.95"/></svg>
<div class="a" style="left:332px;top:356px;width:416px;height:20px;background:#fff;border:1px solid #a5a5a5"></div>
<div class="a" style="left:757px;top:356px;width:110px;height:22px;background:#e1e1e1;border:1px solid #adadad"></div>
<svg style="left:299px;top:382px;" width="570" height="1" viewBox="0 0 570 1"><line x1="0" y1="0.5" x2="570" y2="0.5" stroke="#c8c8c8" stroke-dasharray="1 2"/></svg>
<div class="a" style="left:299px;top:406px;width:449px;height:20px;background:#fff;border:1px solid #a5a5a5"></div>
<div class="a" style="left:299px;top:445px;width:449px;height:161px;background:#fff;border:1px solid #828282"></div>
<div class="a" style="left:709px;top:622px;width:74px;height:22px;background:#e1e1e1;border:2px solid #0078d7"></div>
<div class="a" style="left:793px;top:622px;width:74px;height:22px;background:#e1e1e1;border:1px solid #adadad"></div>
<div class="a" style="left:210px;top:378px;width:80px;height:267px;background:#f0f0f0;border:1px solid #828790"></div>
<div class="a" style="left:211px;top:444px;width:78px;height:63px;background:#b4e0f4"></div>
<div class="a" style="left:308px;top:452px;width:9px;height:9px;background:linear-gradient(#fff,#dfe6ee);border:1px solid #91a0b0"></div>
<div class="a" style="left:310px;top:456px;width:5px;height:1px;background:#1c4f86"></div>
<svg style="left:0px;top:0px" width="1044" height="724" shape-rendering="crispEdges"><g fill="#8c8c8c"><rect x="318" y="456" width="1" height="1"/><rect x="320" y="456" width="1" height="1"/><rect x="322" y="456" width="1" height="1"/><rect x="312" y="462" width="1" height="1"/><rect x="312" y="464" width="1" height="1"/><rect x="312" y="466" width="1" height="1"/><rect x="312" y="468" width="1" height="1"/><rect x="312" y="470" width="1" height="1"/><rect x="312" y="472" width="1" height="1"/><rect x="312" y="474" width="1" height="1"/><rect x="312" y="476" width="1" height="1"/><rect x="312" y="478" width="1" height="1"/><rect x="312" y="480" width="1" height="1"/><rect x="312" y="482" width="1" height="1"/><rect x="312" y="484" width="1" height="1"/><rect x="312" y="486" width="1" height="1"/><rect x="312" y="488" width="1" height="1"/><rect x="312" y="490" width="1" height="1"/><rect x="312" y="492" width="1" height="1"/><rect x="312" y="494" width="1" height="1"/><rect x="312" y="496" width="1" height="1"/><rect x="312" y="498" width="1" height="1"/><rect x="312" y="500" width="1" height="1"/><rect x="312" y="502" width="1" height="1"/><rect x="312" y="504" width="1" height="1"/><rect x="312" y="506" width="1" height="1"/><rect x="312" y="508" width="1" height="1"/><rect x="312" y="510" width="1" height="1"/><rect x="314" y="510" width="1" height="1"/><rect x="316" y="510" width="1" height="1"/><rect x="318" y="510" width="1" height="1"/><rect x="320" y="510" width="1" height="1"/><rect x="332" y="464" width="1" height="1"/><rect x="332" y="466" width="1" height="1"/><rect x="332" y="468" width="1" height="1"/><rect x="332" y="470" width="1" height="1"/><rect x="332" y="472" width="1" height="1"/><rect x="332" y="474" width="1" height="1"/><rect x="332" y="476" width="1" height="1"/><rect x="332" y="478" width="1" height="1"/><rect x="332" y="480" width="1" height="1"/><rect x="332" y="482" width="1" height="1"/><rect x="332" y="484" width="1" height="1"/><rect x="332" y="486" width="1" height="1"/><rect x="332" y="488" width="1" height="1"/><rect x="332" y="490" width="1" height="1"/><rect x="332" y="492" width="1" height="1"/><rect x="334" y="474" width="1" height="1"/><rect x="336" y="474" width="1" height="1"/><rect x="338" y="474" width="1" height="1"/><rect x="340" y="474" width="1" height="1"/><rect x="334" y="492" width="1" height="1"/><rect x="336" y="492" width="1" height="1"/><rect x="338" y="492" width="1" height="1"/><rect x="340" y="492" width="1" height="1"/></g></svg>
<div class="a" style="left:341px;top:484px;width:36px;height:15px;background:#ebebeb"></div>
<svg style="left:241px;top:389px;" width="18" height="18" viewBox="0 0 18 18"><path d="M1.5 1.5H7.8L10 3.7V15.5H1.5Z" fill="#fff" stroke="#8a8a8a" stroke-width="1"/><path d="M3 4.5H5.5M3 6.5H5.5M3 8.5H5.5M3 10.5H5.5M3 12.5H5.5" stroke="#aaa" stroke-width="0.8"/><path d="M5.5 3.5H13.2L16.4 6.7V16.5H5.5Z" fill="#fff" stroke="#222" stroke-width="1.1"/><g fill="#f5b95c"><circle cx="7" cy="5.5" r="0.6"/><circle cx="9.5" cy="5.5" r="0.6"/><circle cx="7" cy="8" r="0.6"/><circle cx="7" cy="11" r="0.6"/><circle cx="7" cy="14" r="0.6"/><circle cx="9.5" cy="15" r="0.6"/><circle cx="12" cy="15" r="0.6"/><circle cx="14.5" cy="12" r="0.6"/><circle cx="14.5" cy="9" r="0.6"/></g><circle cx="11" cy="10" r="3.2" fill="#111"/><path d="M9 10L12.8 7.8V12.2Z" fill="#19c3d8"/></svg>
<svg style="left:241px;top:454px;" width="18" height="18" viewBox="0 0 18 18"><path d="M4.5 1.5H12.4L16.5 5.6V16.5H4.5Z" fill="#fff" stroke="#999" stroke-width="1"/><path d="M12.4 1.5V5.6H16.5" fill="none" stroke="#222" stroke-width="1.2"/><path d="M16.5 5.6V16.5H4.5" fill="none" stroke="#222" stroke-width="1.3"/><path d="M6.5 4.5H9.5M6.5 6.5H9.5M6.5 8.5H9.5M11 12.5H14.5M7.5 14.5H14.5" stroke="#1e78d0" stroke-width="0.9"/><rect x="10.5" y="5.5" width="3.5" height="4.5" fill="none" stroke="#aaa" stroke-width="0.9"/><path d="M3.5 4.5C1.2 5.5 1 9 3.5 10.5L5 11.5L5 9.5L9.2 12.5L5 16V14C1.5 13.5 -0.5 8 3.5 4.5Z" fill="#1e78d0"/></svg>
<svg style="left:241px;top:519px;" width="18" height="18" viewBox="0 0 18 18"><path d="M4.5 2.5H12.4L16.5 6.6V16.5H4.5Z" fill="#fff" stroke="#999" stroke-width="1"/><path d="M12.4 2.5V6.6H16.5M16.5 6.6V16.5H4.5" fill="none" stroke="#222" stroke-width="1.3"/><path d="M6.5 12.5H9M6.5 14.5H14.5" stroke="#999" stroke-width="0.9"/><rect x="10.5" y="6.5" width="3.5" height="4.5" fill="none" stroke="#aaa" stroke-width="0.9"/><path d="M1 1.5L7.5 8M7.5 1.5L1 8M4.3 0.5V9M0.5 4.8H8" stroke="#f5b95c" stroke-width="1"/><path d="M2.5 3L6 6.5M6 3L2.5 6.5" stroke="#888" stroke-width="0.7"/></svg>
<svg style="left:241px;top:584px;" width="19" height="18" viewBox="0 0 19 18"><path d="M6.5 1.5H13.4L17.5 5.6V15.5H6.5Z" fill="#fff" stroke="#999" stroke-width="1"/><path d="M13.4 1.5V5.6H17.5M17.5 5.6V15.5H11" fill="none" stroke="#222" stroke-width="1.3"/><path d="M8 4.5H12M8 6.5H12M13.5 8.5H15.5M13.5 10.5H15.5" stroke="#aaa" stroke-width="0.9"/><rect x="1.5" y="9.5" width="10" height="7" fill="#f5d9a8" stroke="#444" stroke-width="1.1"/><path d="M1.5 9.5L6.5 13.5L11.5 9.5M1.5 16.5L5 13M11.5 16.5L8 13" fill="none" stroke="#777" stroke-width="0.8"/></svg>
<div class="t" style="left:450.75px;top:10px;font-size:12.5px;color:#a2e4da;transform:scaleX(0.9480);">Создание ссылок</div>
<div class="t" style="left:553.00px;top:10px;font-size:12.5px;color:#a2e4da;">-</div>
<div class="t" style="left:563.12px;top:10px;font-size:12.5px;color:#a2e4da;transform:scaleX(0.8759);">Excel</div>
<div class="t" style="left:813.03px;top:8px;font-size:13px;color:#086b3a;font-weight:bold;transform:scaleX(0.7710);">Вход</div>
<div class="t" style="left:13.57px;top:41px;font-size:13px;color:#ffffff;transform:scaleX(0.9333);">Файл</div>
<div class="t" style="left:71.91px;top:41px;font-size:13px;color:#0b6e3a;transform:scaleX(0.8938);">Главная</div>
<div class="t" style="left:142.11px;top:41px;font-size:13px;color:#ffffff;transform:scaleX(0.8936);">Вставка</div>
<div class="t" style="left:211.08px;top:41px;font-size:13px;color:#ffffff;transform:scaleX(0.9181);">Разметка страницы</div>
<div class="t" style="left:345.03px;top:41px;font-size:13px;color:#ffffff;transform:scaleX(0.9727);">Формулы</div>
<div class="t" style="left:426.00px;top:41px;font-size:13px;color:#ffffff;transform:scaleX(0.9149);">Данные</div>
<div class="t" style="left:494.08px;top:41px;font-size:13px;color:#ffffff;transform:scaleX(0.9192);">Рецензирование</div>
<div class="t" style="left:611.13px;top:41px;font-size:13px;color:#ffffff;transform:scaleX(0.8696);">Вид</div>
<div class="t" style="left:657.67px;top:41px;font-size:13px;color:#ffffff;transform:scaleX(0.9253);">Разработчик</div>
<div class="t" style="left:753.08px;top:41px;font-size:13px;color:#ffffff;transform:scaleX(0.9200);">Справка</div>
<div class="t" style="left:849.00px;top:41px;font-size:13px;color:#ffffff;">Помощн</div>
<div class="t" style="left:937.06px;top:41px;font-size:13px;color:#ffffff;transform:scaleX(0.9360);">Общий доступ</div>
<div class="t" style="left:8.49px;top:107px;font-size:11.5px;color:#161616;transform:scaleX(1.0085);">Вставить</div>
<div class="t" style="left:3.01px;top:142px;font-size:11.5px;color:#161616;transform:scaleX(0.9935);">Буфер обмена</div>
<div class="t" style="left:112.90px;top:81px;font-size:11.5px;color:#262626;transform:scaleX(1.0968);">Calibri</div>
<div class="t" style="left:225.00px;top:81px;font-size:11.5px;color:#262626;">12</div>
<div class="t" style="left:180.95px;top:142px;font-size:11.5px;color:#161616;transform:scaleX(1.0541);">Шрифт</div>
<div class="t" style="left:354.48px;top:142px;font-size:11.5px;color:#161616;transform:scaleX(1.0154);">Выравнивание</div>
<div class="t" style="left:501.50px;top:73px;font-size:11.5px;color:#262626;transform:scaleX(1.0838);">Общий</div>
<div class="t" style="left:511.85px;top:142px;font-size:11.5px;color:#161616;transform:scaleX(0.9531);">Число</div>
<div class="t" style="left:613.15px;top:73px;font-size:11.5px;color:#161616;transform:scaleX(1.0469);">Условное форматирование</div>
<div class="t" style="left:612.95px;top:96px;font-size:11.5px;color:#161616;transform:scaleX(1.0470);">Форматировать как таблицу</div>
<div class="t" style="left:612.96px;top:119px;font-size:11.5px;color:#161616;transform:scaleX(1.0415);">Стили ячеек</div>
<div class="t" style="left:671.62px;top:142px;font-size:11.5px;color:#161616;transform:scaleX(0.9750);">Стили</div>
<div class="t" style="left:822.30px;top:73px;font-size:11.5px;color:#161616;">Вставить</div>
<div class="t" style="left:821.99px;top:96px;font-size:11.5px;color:#161616;transform:scaleX(1.0140);">Удалить</div>
<div class="t" style="left:821.92px;top:119px;font-size:11.5px;color:#161616;transform:scaleX(1.0750);">Формат</div>
<div class="t" style="left:823.93px;top:142px;font-size:11.5px;color:#161616;transform:scaleX(1.0730);">Ячейки</div>
<div class="t" style="left:901.39px;top:142px;font-size:11.5px;color:#161616;transform:scaleX(1.0128);">Редактирование</div>
<div class="t" style="left:10.93px;top:173px;font-size:13px;color:#262626;transform:scaleX(0.9667);">D3</div>
<div class="t" style="left:59.00px;top:206px;font-size:14px;color:#2a2a2a;">A</div>
<div class="t" style="left:137.00px;top:206px;font-size:14px;color:#2a2a2a;">B</div>
<div class="t" style="left:220.43px;top:206px;font-size:14px;color:#2a2a2a;transform:scaleX(0.9667);">C</div>
<div class="t" style="left:330.72px;top:206px;font-size:14px;color:#217346;transform:scaleX(0.9778);">D</div>
<div class="t" style="left:437.20px;top:206px;font-size:14px;color:#2a2a2a;">E</div>
<div class="t" style="left:509.30px;top:206px;font-size:14px;color:#2a2a2a;">F</div>
<div class="t" style="left:580.30px;top:206px;font-size:14px;color:#2a2a2a;">G</div>
<div class="t" style="left:653.00px;top:206px;font-size:14px;color:#2a2a2a;">H</div>
<div class="t" style="left:728.40px;top:206px;font-size:14px;color:#2a2a2a;">I</div>
<div class="t" style="left:798.20px;top:206px;font-size:14px;color:#2a2a2a;">J</div>
<div class="t" style="left:869.40px;top:206px;font-size:14px;color:#2a2a2a;">K</div>
<div class="t" style="left:941.30px;top:206px;font-size:14px;color:#2a2a2a;">L</div>
<div class="a" style="left:982px;top:202px;width:39px;height:20px;overflow:hidden"><div class="t" style="left:28.50px;top:4px;font-size:14px;color:#2a2a2a;">M</div></div>
<div class="t" style="left:9.20px;top:227px;font-size:14px;color:#2a2a2a;">1</div>
<div class="t" style="left:9.20px;top:248px;font-size:14px;color:#2a2a2a;">2</div>
<div class="t" style="left:9.20px;top:269px;font-size:14px;color:#217346;">3</div>
<div class="t" style="left:9.20px;top:290px;font-size:14px;color:#2a2a2a;">4</div>
<div class="t" style="left:9.20px;top:311px;font-size:14px;color:#2a2a2a;">5</div>
<div class="t" style="left:9.20px;top:332px;font-size:14px;color:#2a2a2a;">6</div>
<div class="t" style="left:9.20px;top:353px;font-size:14px;color:#2a2a2a;">7</div>
<div class="t" style="left:9.20px;top:374px;font-size:14px;color:#2a2a2a;">8</div>
<div class="t" style="left:9.20px;top:395px;font-size:14px;color:#2a2a2a;">9</div>
<div class="t" style="left:5.20px;top:416px;font-size:14px;color:#2a2a2a;">10</div>
<div class="t" style="left:5.70px;top:437px;font-size:14px;color:#2a2a2a;">11</div>
<div class="t" style="left:5.20px;top:458px;font-size:14px;color:#2a2a2a;">12</div>
<div class="t" style="left:5.20px;top:479px;font-size:14px;color:#2a2a2a;">13</div>
<div class="t" style="left:5.20px;top:500px;font-size:14px;color:#2a2a2a;">14</div>
<div class="t" style="left:5.20px;top:521px;font-size:14px;color:#2a2a2a;">15</div>
<div class="t" style="left:5.20px;top:542px;font-size:14px;color:#2a2a2a;">16</div>
<div class="t" style="left:5.20px;top:563px;font-size:14px;color:#2a2a2a;">17</div>
<div class="t" style="left:5.20px;top:584px;font-size:14px;color:#2a2a2a;">18</div>
<div class="t" style="left:5.20px;top:605px;font-size:14px;color:#2a2a2a;">19</div>
<div class="t" style="left:5.20px;top:626px;font-size:14px;color:#2a2a2a;">20</div>
<div class="t" style="left:5.20px;top:647px;font-size:14px;color:#2a2a2a;">21</div>
<div class="a" style="left:0px;top:202px;width:27px;height:473px;overflow:hidden"><div class="t" style="left:5.20px;top:466px;font-size:14px;color:#2a2a2a;">22</div></div>
<div class="t" style="left:89.00px;top:227px;font-size:14px;color:#000;">1</div>
<div class="t" style="left:173.20px;top:227px;font-size:14px;color:#000;">2</div>
<div class="t" style="left:88.00px;top:248px;font-size:14px;color:#000;">4</div>
<div class="t" style="left:173.20px;top:248px;font-size:14px;color:#000;">3</div>
<div class="t" style="left:211.35px;top:329px;font-size:11.5px;color:#000000;transform:scaleX(1.0464);">Вставка гиперссылки</div>
<div class="t" style="left:218.66px;top:361px;font-size:11.5px;color:#000000;transform:scaleX(0.9370);">Связать с:</div>
<div class="t" style="left:299.60px;top:361px;font-size:11.5px;color:#000000;transform:scaleX(0.9290);">Текст:</div>
<div class="t" style="left:335.00px;top:361px;font-size:11.5px;color:#000000;transform:scaleX(0.9542);">Лист2!A5</div>
<div class="t" style="left:779.50px;top:363px;font-size:11.5px;color:#000000;">Подсказка...</div>
<div class="t" style="left:298.61px;top:392px;font-size:11.5px;color:#000000;transform:scaleX(0.9950);">Введите адрес ячейки:</div>
<div class="t" style="left:302.40px;top:411px;font-size:11.5px;color:#000000;transform:scaleX(0.8929);">A5</div>
<div class="t" style="left:298.30px;top:431px;font-size:11.5px;color:#000000;">Или выберите место в документе:</div>
<div class="t" style="left:323.57px;top:450px;font-size:11.5px;color:#000000;transform:scaleX(1.0274);">Ссылка на ячейку</div>
<div class="t" style="left:342.65px;top:468px;font-size:11.5px;color:#000000;transform:scaleX(1.0463);">microexcel.ru</div>
<div class="t" style="left:343.30px;top:486px;font-size:11.5px;color:#000000;transform:scaleX(1.0226);">Лист2</div>
<div class="t" style="left:324.60px;top:504px;font-size:11.5px;color:#000000;transform:scaleX(1.0153);">Определенные имена</div>
<div class="t" style="left:215.00px;top:408px;font-size:11.5px;color:#000000;transform:scaleX(0.9847);">файлом, веб-</div>
<div class="t" style="left:221.90px;top:421px;font-size:11.5px;color:#000000;transform:scaleX(1.0091);">страницей</div>
<div class="t" style="left:228.59px;top:473px;font-size:11.5px;color:#000000;transform:scaleX(1.0098);">Место в</div>
<div class="t" style="left:222.00px;top:486px;font-size:11.5px;color:#000000;transform:scaleX(0.9911);">документе</div>
<div class="t" style="left:231.56px;top:538px;font-size:11.5px;color:#000000;transform:scaleX(1.0412);">Новый</div>
<div class="t" style="left:225.30px;top:551px;font-size:11.5px;color:#000000;transform:scaleX(0.9860);">документ</div>
<div class="t" style="left:213.88px;top:603px;font-size:11.5px;color:#000000;transform:scaleX(1.0235);">Электронная</div>
<div class="t" style="left:233.73px;top:616px;font-size:11.5px;color:#000000;transform:scaleX(1.0690);">почта</div>
<div class="t" style="left:738.40px;top:628px;font-size:11.5px;color:#000000;transform:scaleX(0.8938);">OK</div>
<div class="t" style="left:809.60px;top:628px;font-size:11.5px;color:#000000;transform:scaleX(0.9683);">Отмена</div>
<div class="t" style="left:110.50px;top:682px;font-size:13px;color:#217346;font-weight:bold;">microexcel.ru</div>
<div class="t" style="left:220.09px;top:682px;font-size:13px;color:#262626;font-style:italic;transform:scaleX(0.7881);">Лист2</div>
<div class="t" style="left:6.46px;top:708px;font-size:11.5px;color:#262626;transform:scaleX(1.0441);">Готово</div>
<div class="t" style="left:993.87px;top:708px;font-size:11.5px;color:#262626;transform:scaleX(0.9258);">100 %</div>
<div class="t" style="left:115.70px;top:111px;font-size:11.5px;color:#7a2222;font-weight:bold;transform:scaleX(1.2300);">Ж</div>
<div class="t" style="left:138.90px;top:111px;font-size:11.5px;color:#7a2222;font-weight:bold;font-style:italic;transform:scaleX(1.0875);">К</div>
<div class="t" style="left:160.86px;top:111px;font-size:11.5px;color:#7a2222;font-weight:bold;transform:scaleX(1.1429);">Ч</div>
<div class="t" style="left:802.67px;top:326px;font-size:14px;color:#000000;transform:scaleX(0.9333);">?</div>
<div class="a" style="left:295px;top:403px;width:461px;height:27px;border:3px solid #ff0000;border-radius:9px"></div>
<div class="a" style="left:210px;top:444px;width:79px;height:64px;border:3px solid #ff0000;border-radius:9px"></div>
<div class="a" style="left:328px;top:479px;width:63px;height:23px;border:3px solid #ff0000;border-radius:11px"></div>
<svg style="position:absolute;left:668px;top:624px" width="42" height="18" viewBox="0 0 42 18"><path d="M2.5 9.2H31" stroke="#e00000" stroke-width="3"/><path d="M27.5 2.2L40 9.2L27.5 16.2L30.5 9.2Z" fill="#e00000"/></svg>
<div class="a" style="left:310.7px;top:371px;width:5.5px;height:1px;background:#000"></div>
<div class="a" style="left:345.5px;top:402px;width:5.0px;height:1px;background:#000"></div>
<div class="a" style="left:331.8px;top:441px;width:6.099999999999966px;height:1px;background:#000"></div>
<div class="a" style="left:263.6px;top:418px;width:5.399999999999977px;height:1px;background:#000"></div>
<div class="a" style="left:229px;top:483px;width:9.800000000000011px;height:1px;background:#000"></div>
<div class="a" style="left:240.4px;top:548px;width:6.299999999999983px;height:1px;background:#000"></div>
<div class="a" style="left:259.6px;top:613px;width:6.199999999999989px;height:1px;background:#000"></div>
</body></html>
